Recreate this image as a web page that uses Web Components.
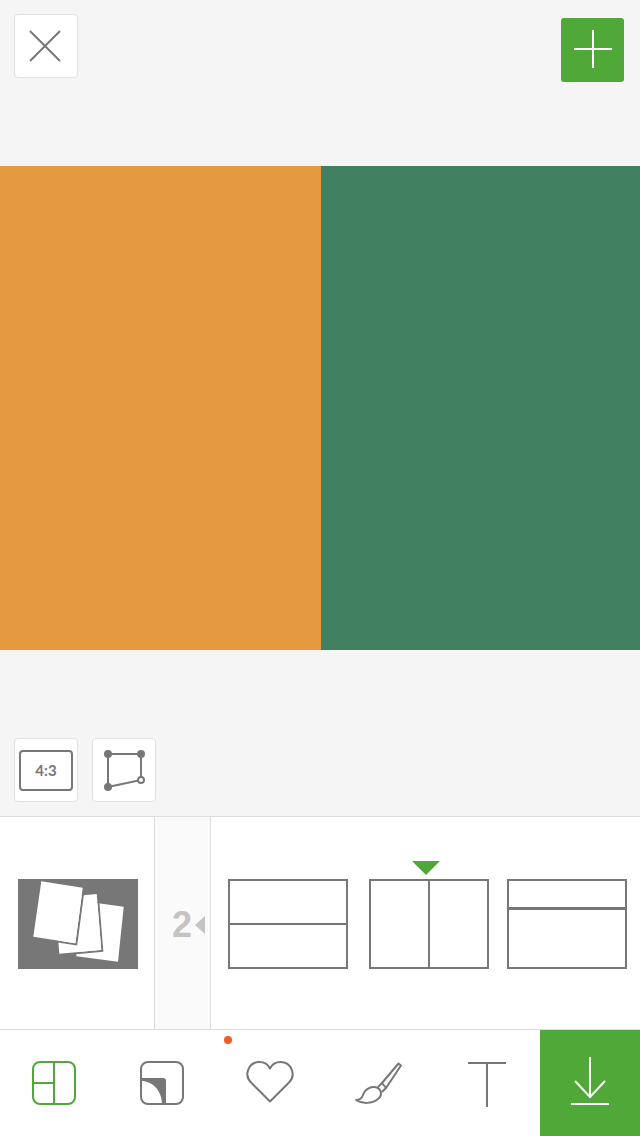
<!DOCTYPE html>
<html lang="en">
<head>
    <meta charset="UTF-8">
    <meta name="viewport" content="width=device-width, initial-scale=1.0">
    <title>Collage editor</title>
    <style>
        html, body { margin: 0; padding: 0; }
        body {
            width: 640px;
            height: 1136px;
            overflow: hidden;
            background: #f5f5f5;
            font-family: "Liberation Sans", Arial, sans-serif;
        }
    </style>
</head>
<body>
    <collage-app></collage-app>

    <script>
        // small helper, every element below is just markup + styles in an open shadow root
        function define(name, html) {
            customElements.define(name, class extends HTMLElement {
                constructor() {
                    super();
                    this.attachShadow({ mode: 'open' }).innerHTML = html;
                }
            });
        }

        define('tool-button', `
            <style>
                :host {
                    display: flex;
                    box-sizing: border-box;
                    width: 64px;
                    height: 64px;
                    border: 1px solid #e2e2e2;
                    border-radius: 4px;
                    background: #fff;
                    align-items: center;
                    justify-content: center;
                }
                :host([primary]) {
                    width: 63px;
                    margin-top: 4px;
                    border: 0;
                    border-radius: 3px;
                    background: #4fa838;
                }
                ::slotted(svg) { display: block; }
            </style>
            <slot></slot>
        `);

        define('ratio-label', `
            <style>
                :host {
                    display: flex;
                    box-sizing: border-box;
                    width: 54px;
                    height: 41px;
                    border: 2px solid #777;
                    border-radius: 4px;
                    align-items: center;
                    justify-content: center;
                    color: #777;
                    font: 700 15px Lato, "Liberation Sans", sans-serif;
                }
            </style>
            <slot></slot>
        `);

        define('top-bar', `
            <style>
                :host {
                    display: flex;
                    box-sizing: border-box;
                    height: 166px;
                    padding: 14px 16px 0 14px;
                    justify-content: space-between;
                    align-items: flex-start;
                }
            </style>
            <slot></slot>
        `);

        define('collage-canvas', `
            <style>
                :host {
                    display: grid;
                    grid-template-columns: 321px 1fr;
                    height: 484px;
                }
                .a { background: #e59a40; }
                .b { background: #408060; }
            </style>
            <div class="a"></div>
            <div class="b"></div>
        `);

        define('tool-row', `
            <style>
                :host {
                    display: flex;
                    box-sizing: border-box;
                    height: 166px;
                    padding: 88px 0 0 14px;
                    gap: 14px;
                }
            </style>
            <slot></slot>
        `);

        define('photo-thumb', `
            <style>
                :host {
                    display: block;
                    box-sizing: border-box;
                    width: 154px;
                    padding: 62px 0 0 18px;
                }
                svg { display: block; }
            </style>
            <svg width="120" height="90" viewBox="0 0 120 90">
                <rect width="120" height="90" fill="#777"/>
                <polygon fill="#fff" points="64,22 105.7,27.7 100,82.7 58.3,77.3"/>
                <path d="M79.7 15L84.3 71.8L41 75.7" fill="none" stroke="#777" stroke-width="2"/>
                <polygon fill="#fff" points="37,19 78.7,15 83.3,71 41.3,74.7"/>
                <path d="M65.8 8.8L58.3 65.4L40 62.5" fill="none" stroke="#777" stroke-width="2"/>
                <polygon fill="#fff" points="23.3,2.3 64.7,8.7 57.3,64.3 15.3,57.7"/>
            </svg>
        `);

        define('count-tab', `
            <style>
                :host {
                    display: flex;
                    box-sizing: border-box;
                    width: 57px;
                    padding: 87px 0 0 17px;
                    border-left: 1px solid #ddd;
                    border-right: 1px solid #ddd;
                    background: #fafafa;
                    align-items: flex-start;
                    gap: 3px;
                    color: #c4c4c4;
                    font: 700 36px/41px "Liberation Sans", sans-serif;
                }
                i {
                    width: 0;
                    height: 0;
                    margin-top: 12px;
                    border-top: 9px solid transparent;
                    border-bottom: 9px solid transparent;
                    border-right: 10px solid #c4c4c4;
                }
            </style>
            <span><slot></slot></span><i></i>
        `);

        define('layout-card', `
            <style>
                :host {
                    display: grid;
                    position: relative;
                    box-sizing: border-box;
                    width: 120px;
                    height: 90px;
                    border: 2px solid #777;
                    background: #777;
                    gap: 2px;
                    grid-template-rows: 1fr 1fr;
                }
                :host([split="columns"]) {
                    grid-template-rows: none;
                    grid-template-columns: 1fr 1fr;
                }
                :host([split="top"]) {
                    grid-template-rows: 26px 1fr;
                    gap: 3px;
                }
                div { background: #fff; }
                .pick {
                    display: none;
                    position: absolute;
                    top: -20px;
                    left: 41px;
                    width: 0;
                    height: 0;
                    background: none;
                    border-left: 14px solid transparent;
                    border-right: 14px solid transparent;
                    border-top: 14px solid #4fa838;
                }
                :host([selected]) .pick { display: block; }
            </style>
            <div></div>
            <div></div>
            <div class="pick"></div>
        `);

        define('layout-list', `
            <style>
                :host {
                    display: flex;
                    box-sizing: border-box;
                    flex: 1;
                    padding: 62px 0 0 17px;
                }
                ::slotted(:nth-child(2)) { margin-left: 21px; }
                ::slotted(:nth-child(3)) { margin-left: 18px; }
            </style>
            <slot></slot>
        `);

        define('layout-strip', `
            <style>
                :host {
                    display: flex;
                    box-sizing: border-box;
                    height: 214px;
                    border-top: 1px solid #ddd;
                    border-bottom: 1px solid #ddd;
                    background: #fff;
                }
            </style>
            <slot></slot>
        `);

        define('nav-item', `
            <style>
                :host {
                    display: flex;
                    position: relative;
                    width: 108px;
                    align-items: center;
                    justify-content: center;
                }
                :host([action]) {
                    width: 100px;
                    background: #4fa838;
                }
                .dot {
                    display: none;
                    position: absolute;
                    top: 6px;
                    left: 8px;
                    width: 8px;
                    height: 8px;
                    border-radius: 50%;
                    background: #f15a29;
                }
                :host([dot]) .dot { display: block; }
                ::slotted(svg) { display: block; }
            </style>
            <slot></slot>
            <span class="dot"></span>
        `);

        define('bottom-nav', `
            <style>
                :host {
                    display: flex;
                    height: 106px;
                    background: #fff;
                }
            </style>
            <slot></slot>
        `);

        define('collage-app', `
            <style>
                :host {
                    display: flex;
                    flex-direction: column;
                    width: 640px;
                    height: 1136px;
                }
            </style>
            <top-bar>
                <tool-button>
                    <svg width="62" height="62" viewBox="0 0 62 62" style="fill:none;stroke:#777;stroke-width:2">
                        <path d="M15 16L45 46M45 16L15 46"/>
                    </svg>
                </tool-button>
                <tool-button primary>
                    <svg width="63" height="64" viewBox="0 0 63 64" style="fill:none;stroke:#fff;stroke-width:2">
                        <path d="M13 31H51M32 12V50"/>
                    </svg>
                </tool-button>
            </top-bar>
            <collage-canvas></collage-canvas>
            <tool-row>
                <tool-button><ratio-label>4:3</ratio-label></tool-button>
                <tool-button>
                    <svg width="62" height="62" viewBox="0 0 62 62" style="fill:none;stroke:#777;stroke-width:2">
                        <path d="M15 15H48V41L15 48Z"/>
                        <circle cx="15" cy="15" r="4" fill="#777" stroke="none"/>
                        <circle cx="48" cy="15" r="4" fill="#777" stroke="none"/>
                        <circle cx="15" cy="48" r="4" fill="#777" stroke="none"/>
                        <circle cx="48" cy="41" r="3" fill="#fff"/>
                    </svg>
                </tool-button>
            </tool-row>
            <layout-strip>
                <photo-thumb></photo-thumb>
                <count-tab>2</count-tab>
                <layout-list>
                    <layout-card></layout-card>
                    <layout-card split="columns" selected></layout-card>
                    <layout-card split="top"></layout-card>
                </layout-list>
            </layout-strip>
            <bottom-nav>
                <nav-item>
                    <svg width="60" height="60" viewBox="0 0 60 60" style="fill:none;stroke:#4fa838;stroke-width:2">
                        <rect x="9" y="9" width="42" height="42" rx="7"/>
                        <path d="M30 9V51M9 30H30"/>
                    </svg>
                </nav-item>
                <nav-item>
                    <svg width="60" height="60" viewBox="0 0 60 60" style="fill:none;stroke:#777;stroke-width:2">
                        <rect x="9" y="9" width="42" height="42" rx="7"/>
                        <path d="M9 25H31a3 3 0 0 1 3 3V51H30C30 38 21 28 9 28Z" fill="#777" stroke="none"/>
                    </svg>
                </nav-item>
                <nav-item dot>
                    <svg width="60" height="60" viewBox="0 0 60 60" style="fill:none;stroke:#777;stroke-width:2;stroke-linejoin:round">
                        <path d="M30 15.5C28 11.5 24 9 19.5 9A12 12 0 0 0 11 29.5L30 48.5L49 29.5A12 12 0 0 0 40.5 9C36 9 32 11.5 30 15.5Z"/>
                    </svg>
                </nav-item>
                <nav-item>
                    <svg width="60" height="60" viewBox="0 0 60 60" style="fill:none;stroke:#777;stroke-width:2;stroke-linejoin:round">
                        <path d="M8 47C12 47 14 45 15 42C17 36 24 32 30 35C34 38 34 43 30 46C24 51 14 51 8 47Z"/>
                        <path d="M30 34L34 30L38 35L34 39"/>
                        <path d="M34 30L50.5 10.5L53 12.5L38 35"/>
                    </svg>
                </nav-item>
                <nav-item>
                    <svg width="60" height="60" viewBox="0 0 60 60" style="fill:none;stroke:#777;stroke-width:2">
                        <path d="M12 10H50M31 10V54"/>
                    </svg>
                </nav-item>
                <nav-item action>
                    <svg width="60" height="60" viewBox="0 0 60 60" style="fill:none;stroke:#fff;stroke-width:2">
                        <path d="M30 4V44M15 28L30 44L45 28M11 51H49"/>
                    </svg>
                </nav-item>
            </bottom-nav>
        `);
    </script>
</body>
</html>
